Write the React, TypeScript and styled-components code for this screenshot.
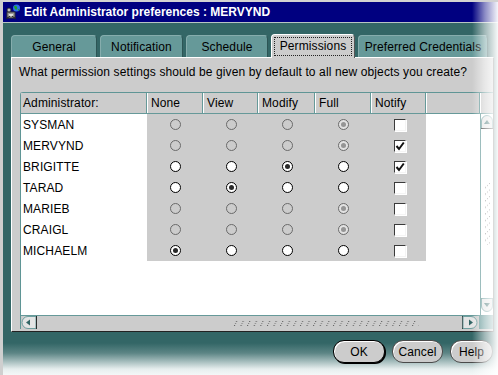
import React from "react";
import styled, { createGlobalStyle, css } from "styled-components";

const GlobalStyle = createGlobalStyle`
  html, body { margin: 0; padding: 0; background: #ffffff; }
  body {
    font-family: "Liberation Sans", Arial, sans-serif;
    font-size: 12px;
    letter-spacing: 0.12px;
    color: #000;
  }
`;

const Frame = styled.div`
  position: relative;
  width: 498px;
  height: 375px;
  box-sizing: border-box;
  border-top: 2px solid #d2d2d2;
  border-left: 3px solid #cfcfcf;
  background: linear-gradient(
    to bottom,
    #336666 0,
    #336666 341px,
    #5c8585 351px,
    #e6eeee 367px,
    #f4f7f7 100%
  );
  overflow: hidden;
  display: flex;
  flex-direction: column;
`;

const TitleBar = styled.div`
  height: 20px;
  background: #000080;
  border-bottom: 1px solid #b8c4c4;
  display: flex;
  align-items: center;
  gap: 3px;
  padding-left: 3px;
  color: #ffffff;
  font-weight: bold;
  font-size: 12px;
  letter-spacing: 0;
  white-space: nowrap;
`;

const Body = styled.div`
  display: flex;
  flex-direction: column;
  padding: 11px 4px 0 8px;
`;

const TabRow = styled.div`
  display: flex;
  align-items: flex-end;
  gap: 3px;
  height: 23px;
`;

const Tab = styled.div<{ $w: number; $active?: boolean }>`
  box-sizing: border-box;
  width: ${(p) => p.$w}px;
  height: 22px;
  flex: none;
  display: flex;
  align-items: center;
  justify-content: center;
  background: #669999;
  border: 1px solid #86adad;
  border-bottom: none;
  border-right-color: #2c5555;
  border-radius: 4px 4px 0 0;
  font-size: 12px;
  white-space: nowrap;
  ${(p) =>
    p.$active &&
    css`
      position: relative;
      z-index: 1;
      height: 24px;
      margin-bottom: -1px;
      background: #cccccc;
      border-color: #ffffff;
      border-right-color: #555555;
    `}
`;

const FocusLabel = styled.span`
  border: 1px dotted #222;
  padding: 0 5px;
  line-height: 17px;
`;

const Panel = styled.div`
  box-sizing: border-box;
  height: 275px;
  background: #cccccc;
  border-top: 1px solid #ffffff;
  border-left: 1px solid #ffffff;
  border-right: 1px solid #333333;
  border-bottom: 1px solid #222222;
  padding: 7px 0 0 8px;
  display: flex;
  flex-direction: column;
`;

const Question = styled.div`
  line-height: 14px;
  margin-left: -1px;
  white-space: nowrap;
`;

const Table = styled.div`
  margin-top: 13px;
  width: 473px;
  box-sizing: border-box;
  border-top: 1px solid #5f9595;
  border-left: 1px solid #5f9595;
  border-radius: 3px 0 0 0;
  display: flex;
  flex-direction: column;
  background: #ffffff;
`;

const HeaderRow = styled.div`
  display: flex;
  height: 21px;
  box-sizing: border-box;
  border-bottom: 1px solid #669999;
`;

const HeadCell = styled.div<{ $w: number; $first?: boolean }>`
  box-sizing: border-box;
  width: ${(p) => p.$w}px;
  flex: none;
  height: 20px;
  background: #cccccc;
  border-right: 1px solid #669999;
  border-left: ${(p) => (p.$first ? "none" : "1px solid #ffffff")};
  padding-left: ${(p) => (p.$first ? 2 : 3)}px;
  display: flex;
  align-items: center;
  white-space: nowrap;
`;

const CornerHead = styled.div`
  flex: 1;
  height: 20px;
  background: #cccccc;
  border-left: 1px solid #ffffff;
`;

const Middle = styled.div`
  display: flex;
  height: 201px;
`;

const Viewport = styled.div`
  width: 459px;
  flex: none;
  background: #ffffff;
`;

const Rows = styled.div`
  display: grid;
  grid-template-columns: 126px 56px 55px 57px 56px 55px 54px;
  grid-auto-rows: 21px;
`;

const NameCell = styled.div`
  display: flex;
  align-items: center;
  padding-left: 2px;
  background: #ffffff;
  white-space: nowrap;
`;

const CtrlCell = styled.div<{ $blank?: boolean }>`
  display: flex;
  align-items: center;
  justify-content: center;
  background: ${(p) => (p.$blank ? "#ffffff" : "#cccccc")};
`;

const Radio = styled.span<{ $on: boolean; $enabled: boolean }>`
  box-sizing: border-box;
  width: 11px;
  height: 11px;
  margin-left: 1px;
  border-radius: 50%;
  border: 1px solid ${(p) => (p.$enabled ? "#000000" : "#6a6a6a")};
  background: ${(p) =>
    p.$enabled ? "#ffffff" : p.$on ? "#e2e2e2" : "transparent"};
  display: flex;
  align-items: center;
  justify-content: center;
  &::after {
    content: "";
    display: ${(p) => (p.$on ? "block" : "none")};
    width: 5px;
    height: 5px;
    border-radius: 50%;
    background: ${(p) => (p.$enabled ? "#2a2a2a" : "#959595")};
  }
`;

const Check = styled.span`
  box-sizing: border-box;
  width: 12px;
  height: 12px;
  margin-left: 2px;
  background: #ffffff;
  border-top: 1px solid #3a3a3a;
  border-left: 1px solid #3a3a3a;
  border-right: 1px solid #f4f4f4;
  border-bottom: 1px solid #f4f4f4;
  box-shadow: 1px 1px 0 #ffffff;
  display: flex;
  align-items: center;
  justify-content: center;
`;

const VScroll = styled.div`
  flex: 1;
  border-left: 1px solid #669999;
  background: #ffffff;
  display: flex;
  flex-direction: column;
  align-items: center;
  justify-content: space-between;
  padding: 1px 0 3px;
`;

const VGrip = styled.div`
  display: flex;
`;

const HScroll = styled.div`
  display: flex;
  height: 14px;
  box-sizing: border-box;
  border-top: 1px solid #669999;
  background: #cccccc;
`;

const HTrack = styled.div`
  flex: 1;
  display: flex;
  align-items: center;
  padding-left: 196px;
`;

const Corner = styled.div`
  width: 14px;
  flex: none;
  background: #6f9f9f;
  border-left: 1px solid #cccccc;
`;

const ButtonRow = styled.div`
  display: flex;
  justify-content: flex-end;
  gap: 7px;
  margin-top: 8px;
  padding-right: 1px;
`;

const DlgButton = styled.div<{ $w: number; $default?: boolean }>`
  box-sizing: border-box;
  width: ${(p) => p.$w}px;
  height: 23px;
  border-radius: 11px;
  background: #cccccc;
  border: 1px solid #4a4a4a;
  box-shadow: inset 1px 1px 0 #ffffff;
  display: flex;
  align-items: center;
  justify-content: center;
  font-size: 12px;
  ${(p) =>
    p.$default &&
    css`
      border: 1px solid #000000;
      box-shadow: inset 1px 1px 0 #ffffff, 1px 1px 0 #000000;
    `}
`;

const RightFade = styled.div`
  position: absolute;
  top: -2px;
  right: 0;
  bottom: 0;
  width: 26px;
  pointer-events: none;
  background: linear-gradient(
    to right,
    rgba(255, 255, 255, 0) 0,
    rgba(255, 255, 255, 0.55) 50%,
    rgba(255, 255, 255, 0.96) 100%
  );
`;

const TitleIcon = () => (
  <svg width="15" height="16" viewBox="0 0 15 16">
    <rect x="1" y="8" width="8" height="6" fill="#9a9a9a" stroke="#333" strokeWidth="1" />
    <rect x="3" y="10" width="4" height="2" fill="#e0e0e0" />
    <circle cx="3" cy="6" r="2" fill="#bdbdbd" stroke="#222" strokeWidth="0.8" />
    <path d="M0 15 L4 12 M10 15 L6 12" stroke="#222" strokeWidth="1" />
    <circle cx="10.5" cy="4" r="3.5" fill="#2d6ee8" />
    <path d="M8 2 Q10 1 11 3 Q12 5 10 6 Q9 5 8.5 4 Z" fill="#1fa52a" />
    <path d="M12 5 Q13.5 5 13.5 6 L12 7 Z" fill="#1fa52a" />
  </svg>
);

const CheckMark = () => (
  <svg width="10" height="10" viewBox="0 0 10 10">
    <path d="M1.5 5 L4 8 L8.8 1.5" fill="none" stroke="#111" strokeWidth="2" />
  </svg>
);

const LeftArrow = () => (
  <svg width="16" height="13" viewBox="0 0 16 13" style={{ flex: "none" }}>
    <path d="M7 0.5 H15 V12.5 H7 A6 6 0 0 1 7 0.5 Z" fill="#e4e4e4" stroke="#6f9f9f" />
    <path d="M5 6.5 L9 3.5 V9.5 Z" fill="#336666" />
    <line x1="15.5" y1="0" x2="15.5" y2="13" stroke="#2b2b2b" />
  </svg>
);

const RightArrow = () => (
  <svg width="16" height="13" viewBox="0 0 16 13" style={{ flex: "none" }}>
    <line x1="0.5" y1="0" x2="0.5" y2="13" stroke="#2b2b2b" />
    <path d="M1 0.5 H9 A6 6 0 0 1 9 12.5 H1 Z" fill="#e4e4e4" stroke="#6f9f9f" />
    <path d="M11 6.5 L7 3.5 V9.5 Z" fill="#336666" />
  </svg>
);

const UpArrow = () => (
  <svg width="12" height="14" viewBox="0 0 12 14">
    <path d="M0.5 13.5 V6 A5.5 5.5 0 0 1 11.5 6 V13.5 Z" fill="#e4e4e4" stroke="#6f9f9f" />
    <path d="M6 5 L3 9 H9 Z" fill="#336666" />
    <line x1="0" y1="13.5" x2="12" y2="13.5" stroke="#2b2b2b" />
  </svg>
);

const DownArrow = () => (
  <svg width="12" height="14" viewBox="0 0 12 14">
    <line x1="0" y1="0.5" x2="12" y2="0.5" stroke="#2b2b2b" />
    <path d="M0.5 0.5 V8 A5.5 5.5 0 0 0 11.5 8 V0.5 Z" fill="#e4e4e4" stroke="#6f9f9f" />
    <path d="M6 9 L3 5 H9 Z" fill="#336666" />
  </svg>
);

const HGrip = () => (
  <svg width="186" height="8" viewBox="0 0 186 8">
    <defs>
      <pattern id="hgrip" width="6.6" height="8" patternUnits="userSpaceOnUse">
        <rect x="1" y="6" width="1" height="1" fill="#555" />
        <rect x="2" y="4" width="1" height="1" fill="#777" />
        <rect x="3" y="2" width="1" height="1" fill="#555" />
      </pattern>
    </defs>
    <rect width="186" height="8" fill="url(#hgrip)" />
  </svg>
);

const VGripArt = () => (
  <svg width="8" height="62" viewBox="0 0 8 62">
    <defs>
      <pattern id="vgrip" width="8" height="6.6" patternUnits="userSpaceOnUse">
        <rect x="2" y="4" width="1" height="1" fill="#555" />
        <rect x="4" y="2" width="1" height="1" fill="#777" />
        <rect x="6" y="0" width="1" height="1" fill="#555" />
      </pattern>
    </defs>
    <rect width="8" height="62" fill="url(#vgrip)" />
  </svg>
);

type Row = { name: string; enabled: boolean; sel: number; notify: boolean };

const rows: Row[] = [
  { name: "SYSMAN", enabled: false, sel: 3, notify: false },
  { name: "MERVYND", enabled: false, sel: 3, notify: true },
  { name: "BRIGITTE", enabled: true, sel: 2, notify: true },
  { name: "TARAD", enabled: true, sel: 1, notify: false },
  { name: "MARIEB", enabled: false, sel: 3, notify: false },
  { name: "CRAIGL", enabled: false, sel: 3, notify: false },
  { name: "MICHAELM", enabled: true, sel: 0, notify: false },
];

const tabs = [
  { label: "General", w: 86 },
  { label: "Notification", w: 83 },
  { label: "Schedule", w: 82 },
  { label: "Permissions", w: 84, active: true },
  { label: "Preferred Credentials", w: 130 },
];

const headers = [
  { label: "Administrator:", w: 126 },
  { label: "None", w: 56 },
  { label: "View", w: 55 },
  { label: "Modify", w: 57 },
  { label: "Full", w: 56 },
  { label: "Notify", w: 55 },
  { label: "", w: 54 },
];

export default function App() {
  return (
    <>
      <GlobalStyle />
      <Frame>
        <TitleBar>
          <TitleIcon />
          <span>Edit Administrator preferences : MERVYND</span>
        </TitleBar>
        <Body>
          <TabRow>
            {tabs.map((t) => (
              <Tab key={t.label} $w={t.w} $active={t.active}>
                {t.active ? <FocusLabel>{t.label}</FocusLabel> : t.label}
              </Tab>
            ))}
          </TabRow>
          <Panel>
            <Question>
              What permission settings should be given by default to all new objects you create?
            </Question>
            <Table>
              <HeaderRow>
                {headers.map((h, i) => (
                  <HeadCell key={i} $w={h.w} $first={i === 0}>
                    {h.label}
                  </HeadCell>
                ))}
                <CornerHead />
              </HeaderRow>
              <Middle>
                <Viewport>
                  <Rows>
                    {rows.map((r) => (
                      <React.Fragment key={r.name}>
                        <NameCell>{r.name}</NameCell>
                        {[0, 1, 2, 3].map((c) => (
                          <CtrlCell key={c}>
                            <Radio $on={r.sel === c} $enabled={r.enabled} />
                          </CtrlCell>
                        ))}
                        <CtrlCell>
                          <Check>{r.notify && <CheckMark />}</Check>
                        </CtrlCell>
                        <CtrlCell $blank />
                      </React.Fragment>
                    ))}
                  </Rows>
                </Viewport>
                <VScroll>
                  <UpArrow />
                  <VGrip>
                    <VGripArt />
                  </VGrip>
                  <DownArrow />
                </VScroll>
              </Middle>
              <HScroll>
                <LeftArrow />
                <HTrack>
                  <HGrip />
                </HTrack>
                <RightArrow />
                <Corner />
              </HScroll>
            </Table>
          </Panel>
          <ButtonRow>
            <DlgButton $w={52} $default>
              OK
            </DlgButton>
            <DlgButton $w={51}>Cancel</DlgButton>
            <DlgButton $w={43}>Help</DlgButton>
          </ButtonRow>
        </Body>
        <RightFade />
      </Frame>
    </>
  );
}
